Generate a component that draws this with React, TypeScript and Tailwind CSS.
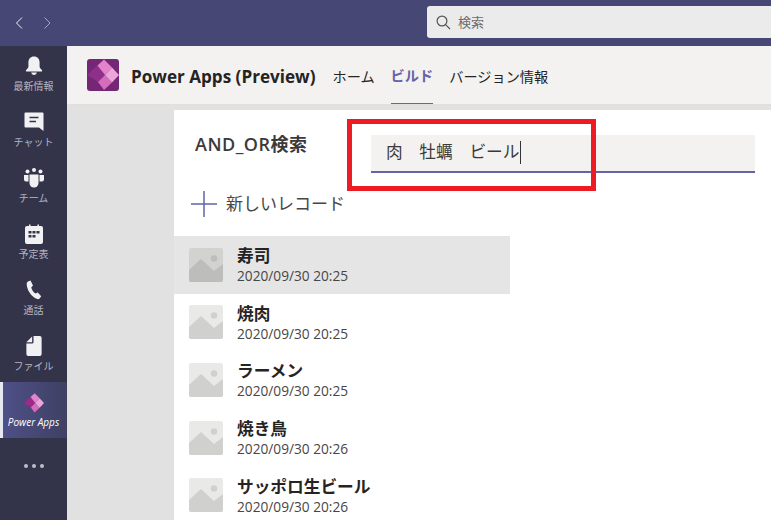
const font = { fontFamily: '"Noto Sans CJK JP", "Open Sans", sans-serif' };

function Logo({ size, left }: { size: number; left: string }) {
  return (
    <svg width={size} height={size} viewBox="0 0 32 32">
      <path d="M0 16 L10.500 6 L18 16 L11 23 Z" fill={left} />
      <path d="M10.500 6.500 L17 0.500 L25 8.500 L18 16 Z" fill="#e283cb" />
      <path d="M11 23 L18 16 L25 23.500 L17 31 Z" fill="#d86cbc" />
      <path d="M18 16 L25 8.500 L32 16 L25 23.500 Z" fill="#eba6da" />
    </svg>
  );
}

function Bell() {
  return (
    <svg width="20" height="20" viewBox="0 0 20 20" fill="#f1f1f3">
      <path d="M10 0.500c3.600 0 5.600 2.600 5.600 6v4.200c0 1.200 1 2 2.200 3.200.7.700.4 1.600-.6 1.600H2.800c-1 0-1.300-.9-.6-1.600 1.200-1.200 2.200-2 2.200-3.200V6.500c0-3.400 2-6 5.600-6z" />
      <path d="M7.200 16.500h5.600c-.3 1.500-1.400 2.500-2.800 2.500s-2.500-1-2.800-2.500z" />
    </svg>
  );
}
function Chat() {
  return (
    <svg width="20" height="20" viewBox="0 0 20 20">
      <path d="M1.500 0.500h17a1 1 0 0 1 1 1v17.500l-4.500-3.500H1.500a1 1 0 0 1-1-1V1.500a1 1 0 0 1 1-1z" fill="#f1f1f3" />
      <path d="M5.500 5.500h9M5.500 9.500h6.500" stroke="#33344a" strokeWidth="1.300" />
    </svg>
  );
}
function Team() {
  return (
    <svg width="20" height="20" viewBox="0 0 20 20" fill="#f1f1f3">
      <circle cx="10" cy="2" r="2" />
      <circle cx="3.500" cy="3.500" r="2" />
      <circle cx="16.500" cy="3.500" r="2" />
      <path d="M0 7h4.500v6.500H2a2 2 0 0 1-2-2zM20 7h-4.500v6.500H18a2 2 0 0 0 2-2z" />
      <path d="M5.500 6.500h9v8.500a4.500 4.500 0 0 1-9 0z" />
    </svg>
  );
}
function Calendar() {
  return (
    <svg width="18" height="20" viewBox="0 0 18 20">
      <path d="M2 2h14a2 2 0 0 1 2 2v14a2 2 0 0 1-2 2H2a2 2 0 0 1-2-2V4a2 2 0 0 1 2-2z" fill="#f1f1f3" />
      <path d="M4 0.500h1.500V3H4zM12.500 0.500H14V3h-1.500z" fill="#f1f1f3" />
      <path d="M3.500 7h3v2.500h-3zM7.500 7h3v2.500h-3zM11.500 7h3v2.500h-3zM3.500 11h3v2.500h-3zM7.500 11h3v2.500h-3z" fill="#33344a" />
    </svg>
  );
}
function Phone() {
  return (
    <svg width="16" height="20" viewBox="0 0 16 20" fill="#f1f1f3">
      <path d="M2 1.500 4.500 0.500 7 5.500 5.200 7.500c.7 2.600 2.300 4.700 4.300 6l2.300-1 3.400 3.800-1.600 2.300c-.8.700-2 .7-3 .2C5 16 1.200 10.500.7 4.500.6 3 1 2 2 1.500z" />
    </svg>
  );
}
function FileIcon() {
  return (
    <svg width="16" height="20" viewBox="0 0 16 21" fill="#f1f1f3">
      <path d="M7.500 0H14a2 2 0 0 1 2 2v17a2 2 0 0 1-2 2H2a2 2 0 0 1-2-2V8h6a1.500 1.500 0 0 0 1.500-1.500z" />
      <path d="M6 0.500V6.500H0z" />
    </svg>
  );
}
function Placeholder({ bg, fg }: { bg: string; fg: string }) {
  return (
    <svg width="34" height="34" viewBox="0 0 34 34" className="shrink-0">
      <rect width="34" height="34" rx="2" fill={bg} />
      <circle cx="25" cy="10.500" r="3.200" fill={fg} />
      <path d="M0 22 12 11 25 23 34 16 34 32a2 2 0 0 1-2 2H2a2 2 0 0 1-2-2z" fill={fg} />
    </svg>
  );
}

const nav = [
  { label: "最新情報", icon: <Bell /> },
  { label: "チャット", icon: <Chat /> },
  { label: "チーム", icon: <Team /> },
  { label: "予定表", icon: <Calendar /> },
  { label: "通話", icon: <Phone /> },
  { label: "ファイル", icon: <FileIcon /> },
];

const rows = [
  { t: "寿司", d: "2020/09/30 20:25", sel: true },
  { t: "焼肉", d: "2020/09/30 20:25" },
  { t: "ラーメン", d: "2020/09/30 20:25" },
  { t: "焼き鳥", d: "2020/09/30 20:26" },
  { t: "サッポロ生ビール", d: "2020/09/30 20:26" },
];

export default function App() {
  return (
    <div className="w-[771px] h-[520px] overflow-hidden flex flex-col relative bg-white" style={font}>
      <div className="h-[46px] shrink-0 flex items-start bg-[#464775]">
        <div className="w-[427px] h-full flex items-center pl-[15px] gap-[19px] shrink-0">
          <svg width="9" height="12" viewBox="0 0 9 12" fill="none" stroke="#f0f0f5" strokeWidth="1">
            <path d="M7 .5 1.500 6 7 11.500" />
          </svg>
          <svg width="9" height="12" viewBox="0 0 9 12" fill="none" stroke="#a5a6c4" strokeWidth="1">
            <path d="M1.500 .5 7 6 1.500 11.500" />
          </svg>
        </div>
        <div className="flex-1 h-8 mt-[6px] bg-[#ebebeb] rounded-l-[3px] flex items-center pl-[9px] gap-[7px] text-[13px] text-[#6b6b6b]">
          <svg width="15" height="15" viewBox="0 0 15 15" fill="none" stroke="#555" strokeWidth="1.200">
            <circle cx="6" cy="6" r="4.900" />
            <path d="M9.600 9.600 14 14" />
          </svg>
          <span>検索</span>
        </div>
      </div>

      <div className="flex-1 flex min-h-0">
        <div className="w-[67px] shrink-0 bg-[#33344a] flex flex-col">
          {nav.map((n) => (
            <div key={n.label} className="h-14 flex flex-col items-center pt-[9px] text-[#b5b5c2]">
              <div className="h-[22px] flex items-center justify-center">{n.icon}</div>
              <span className="text-[10px] leading-[14px] mt-[2px] whitespace-nowrap">{n.label}</span>
            </div>
          ))}
          <div className="h-14 flex flex-col items-center pt-[11px] border-l-[3px] border-[#e8e8f2] bg-gradient-to-r from-[#4e5088] to-[#3f4062] pr-[3px]">
            <Logo size={20} left="#a0288c" />
            <span className="text-[10px] leading-[14px] mt-[2px] italic text-white whitespace-nowrap" style={{ fontFamily: '"Open Sans", sans-serif' }}>
              Power Apps
            </span>
          </div>
          <div className="h-14 flex items-center justify-center gap-[4px]">
            <span className="w-1 h-1 rounded-full bg-[#bdbdc9]" />
            <span className="w-1 h-1 rounded-full bg-[#bdbdc9]" />
            <span className="w-1 h-1 rounded-full bg-[#bdbdc9]" />
          </div>
        </div>

        <div className="flex-1 flex flex-col min-w-0 bg-[#e1e1e1]">
          <div className="h-[59px] shrink-0 bg-[#f3f2f1] border-b border-[#e1dfdd] flex items-center pl-5 text-[#252423]">
            <div className="w-8 h-8 rounded-[3px] bg-[#742774] flex items-center justify-center shrink-0 overflow-hidden">
              <Logo size={32} left="#8e2f8a" />
            </div>
            <span className="ml-3 mt-[3px] text-[17.100px] font-bold whitespace-nowrap" style={{ fontFamily: '"Open Sans", sans-serif' }}>
              Power Apps (Preview)
            </span>
            <div className="ml-[17px] text-[14.200px] h-full flex gap-4 items-center pt-[3px]">
              <span>ホーム</span>
              <span className="h-full flex items-center font-bold text-[#6264a7] border-b border-[#6264a7]">ビルド</span>
              <span>バージョン情報</span>
            </div>
          </div>

          <div className="flex-1 ml-[107px] mt-[5px] bg-white min-h-0 overflow-hidden">
            <div className="h-[64px] flex items-start relative">
              <span className="ml-[21px] mt-[21px] text-[18px] tracking-[0.5px] leading-[26px] font-semibold text-[#3b3a39] w-[176px] shrink-0 whitespace-nowrap" style={{ fontFamily: '"Open Sans", "Noto Sans CJK JP", sans-serif' }}>
                AND_OR検索
              </span>
              <div className="mt-[25px] w-[384px] h-[38px] bg-[#f3f2f1] border-b-2 border-[#6264a7] flex items-center pl-[15px] pb-[2px] text-[16.700px] text-[#3a3a3a] whitespace-pre">
                <span>肉　牡蠣　ビール</span>
                <span className="w-px h-[23px] bg-[#333]" />
              </div>
            </div>
            <div className="h-[62px] pt-[17px] flex items-start pl-[17px] gap-[9px]">
              <svg width="26" height="26" viewBox="0 0 26 26" stroke="#6264a7" strokeWidth="1.500">
                <path d="M13 0v26M0 13h26" />
              </svg>
              <span className="text-[17px] leading-[24px] text-[#484644]">新しいレコード</span>
            </div>
            {rows.map((r) => (
              <div key={r.t} className={`w-[336px] h-[57.600px] flex items-center pl-[15px] gap-[14px] ${r.sel ? "bg-[#e5e5e5]" : "bg-white"}`}>
                <Placeholder bg={r.sel ? "#d2d2d0" : "#e9e9e8"} fg={r.sel ? "#bdbdbb" : "#d0d0ce"} />
                <div className="flex flex-col pt-px">
                  <span className="text-[16.700px] leading-[21px] font-bold text-[#252423] whitespace-nowrap">{r.t}</span>
                  <span className="mt-px text-[13.700px] leading-[18px] text-[#484644] whitespace-nowrap" style={{ fontFamily: '"Open Sans", sans-serif' }}>{r.d}</span>
                </div>
              </div>
            ))}
          </div>
        </div>
      </div>

      <div className="absolute left-[347px] top-[119px] w-[249px] h-[72px] border-[5px] border-[#ed1c24]" />
    </div>
  );
}
